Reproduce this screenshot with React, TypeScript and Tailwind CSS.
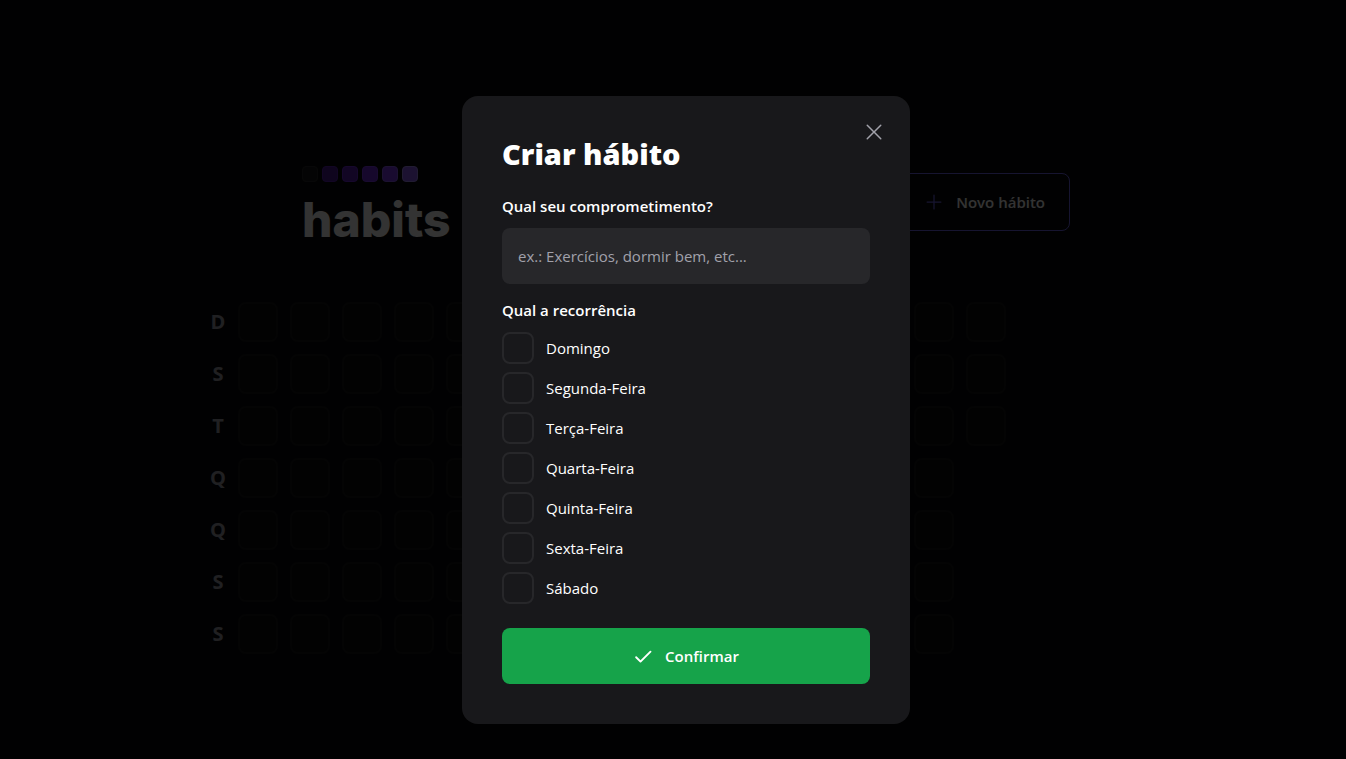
import { PiCheckBold, PiPlus, PiX } from "react-icons/pi";

const weekDayInitials = ["D", "S", "T", "Q", "Q", "S", "S"];

const weekDays = [
  "Domingo",
  "Segunda-Feira",
  "Terça-Feira",
  "Quarta-Feira",
  "Quinta-Feira",
  "Sexta-Feira",
  "Sábado",
];

const summarySize = 14 * 7 + 3;

const logoSquares = [
  "bg-[#18181b] border-[#27272a]",
  "bg-[#4c1d95] border-[#5b21b6]",
  "bg-[#5b21b6] border-[#6d28d9]",
  "bg-[#6d28d9] border-[#7c3aed]",
  "bg-[#7c3aed] border-[#8b5cf6]",
  "bg-[#8b5cf6] border-[#a78bfa]",
];

function Logo() {
  return (
    <div className="flex flex-col gap-5">
      <div className="flex gap-1">
        {logoSquares.map((color) => (
          <span key={color} className={`size-4 rounded border ${color}`} />
        ))}
      </div>
      <span className="font-[Inter,sans-serif] text-5xl leading-[36px] font-extrabold text-white">
        habits
      </span>
    </div>
  );
}

function Header() {
  return (
    <header className="mx-auto flex w-full max-w-3xl items-center justify-between">
      <Logo />
      <button
        type="button"
        className="flex items-center gap-3 rounded-lg border border-[#7066f0] px-6 py-4 leading-6 font-semibold"
      >
        <PiPlus size={20} className="text-[#7066f0]" aria-hidden="true" />
        Novo hábito
      </button>
    </header>
  );
}

function SummaryTable() {
  return (
    <div className="flex w-full">
      <div className="grid grid-rows-7 gap-3">
        {weekDayInitials.map((initial, index) => (
          <div
            key={index}
            className="flex h-10 w-10 items-center justify-center pt-px text-xl font-bold text-[#a1a1aa]"
          >
            {initial}
          </div>
        ))}
      </div>
      <div className="grid grid-flow-col grid-rows-7 gap-3">
        {Array.from({ length: summarySize }, (_, index) => (
          <div
            key={index}
            className="size-10 rounded-lg border-2 border-[#27272a] bg-[#0c0c0e] opacity-40"
          />
        ))}
      </div>
    </div>
  );
}

function NewHabitForm() {
  return (
    <form className="mt-6 flex w-full flex-col" onSubmit={(event) => event.preventDefault()}>
      <label htmlFor="title" className="leading-5 font-semibold">
        Qual seu comprometimento?
      </label>
      <input
        id="title"
        type="text"
        placeholder="ex.: Exercícios, dormir bem, etc..."
        className="mt-3 rounded-lg bg-[#27272a] p-4 leading-6 text-white outline-none placeholder:text-[#a1a1aa]"
      />
      <fieldset className="mt-4">
        <legend className="leading-5 font-semibold">Qual a recorrência</legend>
        <div className="mt-3 flex flex-col gap-2">
          {weekDays.map((weekDay) => (
            <label key={weekDay} className="flex items-center gap-3 leading-5">
              <input
                type="checkbox"
                className="size-8 appearance-none rounded-lg border-2 border-[#27272a] bg-[#18181b] checked:border-[#22c55e] checked:bg-[#22c55e]"
              />
              {weekDay}
            </label>
          ))}
        </div>
      </fieldset>
      <button
        type="submit"
        className="mt-6 flex items-center justify-center gap-3 rounded-lg bg-[#16a34a] p-4 leading-6 font-semibold"
      >
        <PiCheckBold size={20} aria-hidden="true" />
        Confirmar
      </button>
    </form>
  );
}

function NewHabitDialog() {
  return (
    <div className="fixed inset-0 flex items-center justify-center bg-black/80 pt-[60px] pl-[26px]">
      <div
        role="dialog"
        aria-modal="true"
        aria-labelledby="dialog-title"
        className="relative w-full max-w-md rounded-2xl bg-[#18181b] p-10"
      >
        <button
          type="button"
          aria-label="Fechar"
          className="absolute top-6 right-6 text-[#a1a1aa]"
        >
          <PiX size={24} />
        </button>
        <h1 id="dialog-title" className="text-[29px] leading-9 font-extrabold">
          Criar hábito
        </h1>
        <NewHabitForm />
      </div>
    </div>
  );
}

export default function App() {
  return (
    <div className="flex min-h-screen items-center justify-center bg-[#09090a] pt-[60px] pl-[26px] font-['Open_Sans','Noto_Sans',sans-serif] text-[15px] text-white">
      <main className="flex w-full max-w-5xl flex-col gap-16 px-6">
        <Header />
        <SummaryTable />
      </main>
      <NewHabitDialog />
    </div>
  );
}
